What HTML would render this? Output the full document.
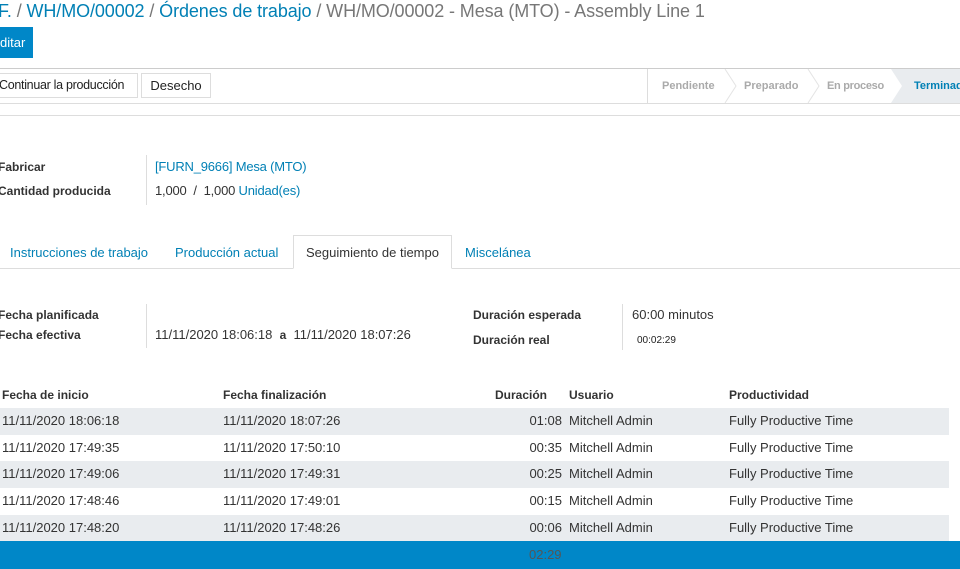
<!DOCTYPE html>
<html><head><meta charset="utf-8"><style>
*{margin:0;padding:0;box-sizing:border-box}
body{width:960px;height:569px;overflow:hidden;background:#fff;font-family:"Liberation Sans",sans-serif;font-size:13px;color:#4c4c4c;position:relative}
.a{position:absolute;white-space:nowrap}
.lnk{color:#0180b5}
b{font-weight:bold;color:#333;font-size:12px}
.t{letter-spacing:-0.2px}
</style></head><body>
<div class="a" style="left:-2px;top:1px;font-size:18px;color:#0180b5;letter-spacing:-0.1px">F. <span style="color:#777">/</span> WH/MO/00002 <span style="color:#777">/</span> Órdenes de trabajo <span style="color:#777">/ WH/MO/00002 - Mesa (MTO) - Assembly Line 1</span></div>
<div class="a" style="left:0;top:27px;width:33px;height:31px;background:#0087c8;color:#fff;font-size:13px;line-height:31px">ditar</div>
<div class="a" style="left:0;top:68px;width:960px;height:36px;border-top:1px solid #ccc;border-bottom:1px solid #ddd"></div>
<div class="a" style="left:-8px;top:73px;width:146px;height:25px;border:1px solid #ddd;line-height:23px;padding-left:6px;color:#222;font-size:12.5px;letter-spacing:-0.3px">Continuar la producción</div>
<div class="a" style="left:141px;top:73px;width:70px;height:25px;border:1px solid #ddd;line-height:23px;text-align:center;color:#222">Desecho</div>
<div class="a" style="left:647px;top:69px;width:1px;height:34px;background:#ddd"></div>
<svg class="a" style="left:647px;top:69px" width="313" height="34"><polygon points="244,0 313,0 313,34 244,34 255,17" fill="#e9ecef"/><polyline points="78,0 89,17 78,34" fill="none" stroke="#e4e4e4"/><polyline points="161,0 172,17 161,34" fill="none" stroke="#e4e4e4"/></svg>
<div class="a" style="left:662px;top:80px;font-size:11px;font-weight:bold;color:#aaa">Pendiente</div>
<div class="a" style="left:744px;top:80px;font-size:11px;font-weight:bold;color:#aaa">Preparado</div>
<div class="a" style="left:827px;top:80px;font-size:11px;font-weight:bold;color:#aaa;letter-spacing:-0.3px">En proceso</div>
<div class="a" style="left:914px;top:80px;font-size:11px;font-weight:bold;color:#0180b5">Terminado</div>
<div class="a" style="left:0;top:115px;width:960px;height:1px;background:#ddd"></div>
<div class="a" style="left:-2px;top:159px"><b>Fabricar</b></div>
<div class="a" style="left:-2px;top:183px"><b>Cantidad producida</b></div>
<div class="a" style="left:146px;top:155px;width:1px;height:50px;background:#ddd"></div>
<div class="a lnk t" style="left:155px;top:159px">[FURN_9666] Mesa (MTO)</div>
<div class="a t" style="left:155px;top:183px;color:#333">1,000 &nbsp;/ &nbsp;1,000 <span class="lnk">Unidad(es)</span></div>
<div class="a" style="left:0;top:268px;width:960px;height:1px;background:#ddd"></div>
<div class="a lnk" style="left:10px;top:245px">Instrucciones de trabajo</div>
<div class="a lnk" style="left:175px;top:245px">Producción actual</div>
<div class="a" style="left:293px;top:235px;width:159px;height:34px;border:1px solid #ddd;border-bottom-color:#fff;background:#fff;text-align:center;line-height:33px;color:#333">Seguimiento de tiempo</div>
<div class="a lnk" style="left:465px;top:245px">Miscelánea</div>
<div class="a" style="left:-2px;top:307px"><b>Fecha planificada</b></div>
<div class="a" style="left:-2px;top:327px"><b>Fecha efectiva</b></div>
<div class="a" style="left:146px;top:304px;width:1px;height:44px;background:#ddd"></div>
<div class="a" style="left:155px;top:327px;color:#333">11/11/2020 18:06:18 &nbsp;<b>a</b>&nbsp; 11/11/2020 18:07:26</div>
<div class="a" style="left:473px;top:307px"><b>Duración esperada</b></div>
<div class="a" style="left:473px;top:332px"><b>Duración real</b></div>
<div class="a" style="left:622px;top:304px;width:1px;height:46px;background:#ddd"></div>
<div class="a" style="left:632px;top:307px;color:#333">60:00 minutos</div>
<div class="a" style="left:637px;top:335px;font-size:10px;color:#222">00:02:29</div>
<div class="a" style="left:2px;top:387px"><b>Fecha de inicio</b></div>
<div class="a" style="left:223px;top:387px"><b>Fecha finalización</b></div>
<div class="a" style="left:495px;top:387px"><b>Duración</b></div>
<div class="a" style="left:569px;top:387px"><b>Usuario</b></div>
<div class="a" style="left:729px;top:387px"><b>Productividad</b></div>
<div class="a" style="left:0;top:408px;width:949px;height:27px;background:#e9ecef"></div>
<div class="a" style="left:0;top:461px;width:949px;height:27px;background:#e9ecef"></div>
<div class="a" style="left:0;top:515px;width:949px;height:26px;background:#e9ecef"></div>
<div class="a" style="left:0;top:541px;width:960px;height:28px;background:#0087c8"></div>
<div class="a" style="left:529px;top:547px;color:#555">02:29</div>
<div class="a" style="left:2px;top:408px;line-height:26.7px;color:#333">11/11/2020 18:06:18<br>11/11/2020 17:49:35<br>11/11/2020 17:49:06<br>11/11/2020 17:48:46<br>11/11/2020 17:48:20</div>
<div class="a" style="left:223px;top:408px;line-height:26.7px;color:#333">11/11/2020 18:07:26<br>11/11/2020 17:50:10<br>11/11/2020 17:49:31<br>11/11/2020 17:49:01<br>11/11/2020 17:48:26</div>
<div class="a" style="left:500px;width:62px;text-align:right;top:408px;line-height:26.7px;color:#333">01:08<br>00:35<br>00:25<br>00:15<br>00:06</div>
<div class="a" style="left:569px;top:408px;line-height:26.7px;color:#333">Mitchell Admin<br>Mitchell Admin<br>Mitchell Admin<br>Mitchell Admin<br>Mitchell Admin</div>
<div class="a" style="left:729px;top:408px;line-height:26.7px;color:#333">Fully Productive Time<br>Fully Productive Time<br>Fully Productive Time<br>Fully Productive Time<br>Fully Productive Time</div>
</body></html>
